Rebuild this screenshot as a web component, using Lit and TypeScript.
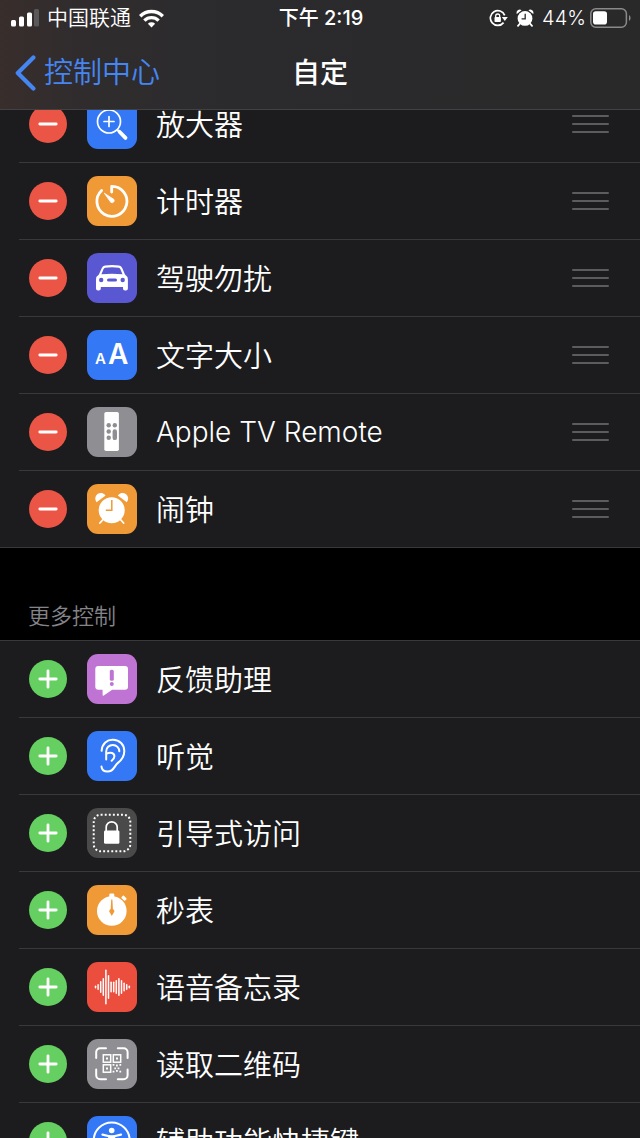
import { LitElement, html, css, svg } from "lit";
import { customElement, property } from "lit/decorators.js";

const TILE_COLORS: Record<string, string> = {
  magnifier: "#3478f6",
  timer: "#ef9a37",
  car: "#5a57d3",
  textsize: "#3478f6",
  remote: "#8e8e93",
  alarm: "#ef9a37",
  feedback: "#bf74d4",
  ear: "#3478f6",
  guided: "#4a4a4b",
  stopwatch: "#ef9a37",
  voice: "#eb4e3d",
  qr: "#8e8e93",
  access: "#3478f6",
};

const WAVE = [3, 6, 12, 18, 35, 24, 11, 11, 14, 18, 14, 9, 6, 3];

const GLYPHS: Record<string, unknown> = {
  magnifier: svg`
    <circle cx="22" cy="22.5" r="11.5" fill="none" stroke="#fff" stroke-width="1.7"/>
    <path d="M22 17.5v10M17 22.5h10" stroke="#fff" stroke-width="1.7" stroke-linecap="round"/>
    <path d="M30.3 30.8l2 2" stroke="#fff" stroke-width="2"/>
    <path d="M32.5 32.7l6 6.2" stroke="#fff" stroke-width="3.8" stroke-linecap="round"/>`,
  timer: svg`
    <path d="M24.7 16V10.3A15 15 0 1 1 14.6 14.4" fill="none" stroke="#fff" stroke-width="2.8" stroke-linecap="round" stroke-linejoin="round"/>
    <path d="M17.3 17.2l9.6 6.2a2.2 2.2 0 0 1-3 3z" fill="#fff" stroke="#fff" stroke-width=".8" stroke-linejoin="round"/>`,
  car: svg`
    <path fill-rule="evenodd" fill="#fff" d="M18 12.6Q25 11.6 32 12.6Q34.3 12.9 35.2 15L38 21.6Q40.8 23.4 40.9 26.5V35.6Q40.9 37.6 38.9 37.6H38Q36 37.6 36 35.6V34H13.8V35.6Q13.8 37.6 11.8 37.6H11Q9 37.6 9 35.6V26.5Q9 23.4 11.9 21.6L14.8 15Q15.7 12.9 18 12.6ZM18.2 14.7Q17 14.9 16.6 16L14.4 21.3Q25 20 35.5 21.3L33.3 16Q32.9 14.9 31.8 14.7Q25 13.9 18.2 14.7Z"/>
    <circle cx="14.2" cy="27" r="2.2" fill="#5a57d3"/><circle cx="35.7" cy="27" r="2.2" fill="#5a57d3"/>
    <rect x="20" y="25.5" width="10" height="3" rx="1.5" fill="#5a57d3"/>`,
  textsize: svg`
    <text x="8" y="34" font-size="15" font-weight="600" fill="#fff">A</text>
    <text x="21" y="34" font-size="28" font-weight="600" fill="#fff">A</text>`,
  remote: svg`
    <rect x="17.3" y="5" width="14.6" height="39" rx="1.8" fill="#fff"/>
    <g fill="#8e8e93"><circle cx="21.7" cy="18.2" r="2.2"/><circle cx="27.8" cy="18.2" r="2.2"/>
    <circle cx="21.7" cy="24.5" r="2.2"/><circle cx="21.7" cy="30.8" r="2.2"/>
    <rect x="25.6" y="22.3" width="4.4" height="10.8" rx="2.2"/></g>`,
  alarm: svg`
    <path d="M16.5 35l-3.6 4M33 35l3.6 4" stroke="#fff" stroke-width="1.8" stroke-linecap="round"/>
    <g fill="#fff"><path d="M9.6 18.2A5.6 5.6 0 1 1 18.6 11.6Z"/><path d="M39.8 18.2A5.6 5.6 0 1 0 30.8 11.6Z"/>
    <circle cx="24.7" cy="26.3" r="13"/></g>
    <path d="M24.8 16v10.3h-6" fill="none" stroke="#ef9a37" stroke-width="1.5"/>`,
  feedback: svg`
    <path fill="#fff" d="M11.3 12H38a3 3 0 0 1 3 3V32.8a3 3 0 0 1-3 3H25.2L16.8 41.6Q15.6 42.2 15.6 41V35.8H11.3a3 3 0 0 1-3-3V15a3 3 0 0 1 3-3Z"/>
    <rect x="22.8" y="15.8" width="4" height="11" rx="1.6" fill="#bf74d4"/><circle cx="24.8" cy="30" r="2" fill="#bf74d4"/>`,
  ear: svg`
    <g fill="none" stroke="#fff" stroke-width="2" stroke-linecap="round">
    <path d="M14.6 19.8C15.2 12.5 20 8.6 26 8.8C32.5 9 37.4 13.5 37.3 20.2C37.2 26 34.2 29.2 31.2 31.6C26.8 35 27.2 40.6 20.6 40.6C17 40.6 14.8 38.6 14.5 35.6"/>
    <path d="M19.2 28.4V20.5C19.2 16.6 22.2 14 25.8 14C29.6 14 32.3 16.8 32.3 20.3"/>
    <path d="M19.6 22.7C23.5 20.6 27.6 22 27.4 25.4C27.3 27.5 26.2 28.8 24.6 29.8"/></g>`,
  guided: svg`
    <rect x="6.7" y="6.7" width="36.6" height="36.6" rx="7" fill="none" stroke="#fff" stroke-width="2" stroke-dasharray="1.9 2.16"/>
    <path d="M19.2 23V19.3a5.5 5.5 0 0 1 11 0V23" fill="none" stroke="#fff" stroke-width="1.7"/>
    <rect x="17" y="22.4" width="15.4" height="13.4" rx="1.4" fill="#fff"/>`,
  stopwatch: svg`
    <g fill="#fff"><circle cx="24.8" cy="26" r="14.8"/><rect x="22.3" y="8.6" width="5" height="5" rx="1.2"/>
    <rect x="34.5" y="11.6" width="5" height="3.2" rx=".8" transform="rotate(45 37 13.2)"/></g>
    <path d="M24.2 14.5h1.2l.5 9.6a2.6 2.6 0 0 1 1.5 2.4L24.8 31l-2.6-4.5a2.6 2.6 0 0 1 1.5-2.4Z" fill="#ef9a37"/>`,
  voice: svg`
    <g stroke="#fff" stroke-width="1.5" stroke-linecap="round">${WAVE.map((h, i) => {
      const x = 8.5 + i * 2.6;
      return svg`<path d=${`M${x} ${25 - h / 2 + 0.7}V${25 + h / 2 - 0.7}`}/>`;
    })}</g>`,
  qr: svg`
    <path d="M9.2 19V13.2a4 4 0 0 1 4-4H19M30.8 9.2h5.8a4 4 0 0 1 4 4V19M40.6 30.4v5.8a4 4 0 0 1-4 4h-5.8M19 40.2h-5.8a4 4 0 0 1-4-4v-5.8" fill="none" stroke="#fff" stroke-width="2" stroke-linecap="round"/>
    <g fill="none" stroke="#fff" stroke-width="1.5"><rect x="16.3" y="15.8" width="7.4" height="7.4"/><rect x="26.3" y="15.8" width="7.4" height="7.4"/><rect x="16.3" y="25.8" width="7.4" height="7.4"/></g>
    <g fill="#fff"><rect x="19" y="18.5" width="2" height="2"/><rect x="29" y="18.5" width="2" height="2"/><rect x="19" y="28.5" width="2" height="2"/>
    <path d="M25.6 25h1.8v1.8h-1.8zM32.4 25h1.8v1.8h-1.8zM29 25.6h1.8v1.8h-1.8zM27.3 28.4h1.8v1.8h-1.8zM30.6 28.4h1.8v1.8h-1.8zM25.6 31.8h1.8v1.8h-1.8zM29 31h1.8v1.8h-1.8zM32.4 31.8h1.8v1.8h-1.8z"/></g>`,
  access: svg`
    <circle cx="24.7" cy="24.5" r="18" fill="none" stroke="#fff" stroke-width="2"/>
    <circle cx="24.7" cy="14.5" r="2.8" fill="#fff"/>
    <path d="M15.5 18.6l6.8 1.6v5l-3 9.6M34 18.6l-6.8 1.6v5l3 9.6" fill="none" stroke="#fff" stroke-width="2.2" stroke-linecap="round" stroke-linejoin="round"/>
    <rect x="21.6" y="19.2" width="6.2" height="7.6" fill="#fff"/>`,
};

@customElement("control-row")
class ControlRow extends LitElement {
  @property() icon = "";
  @property() label = "";
  @property({ type: Boolean }) included = false;

  static styles = css`
    :host { display: block; padding-left: 19px; }
    .row {
      display: flex; align-items: center; height: 76px; padding: 0 31px 0 10px;
      border-bottom: 1px solid #39393b;
    }
    :host([last]) { padding-left: 0; }
    :host([last]) .row { padding-left: 29px; }
    button { border: 0; padding: 0; margin: 0; background: none; display: block; flex: none; }
    .toggle { width: 38px; height: 38px; border-radius: 50%; background: #65cf61; }
    .toggle.remove { background: #eb5545; }
    .tile { width: 50px; height: 50px; margin: 0 19px 0 20px; flex: none; }
    svg { display: block; }
    .label {
      flex: 1; padding-top: 4px; color: #fff; font-size: 29px; line-height: 40px;
      white-space: nowrap;
    }
    .label.latin { padding-top: 0; font-size: 28px; }
    .grip { width: 37px; height: 18px; }
  `;

  render() {
    const latin = /^[\x20-\x7e]+$/.test(this.label);
    return html`<div class="row">
      <button class="toggle ${this.included ? "remove" : ""}" aria-label="${this.included ? "移除" : "添加"}${this.label}">
        <svg width="38" height="38" viewBox="0 0 38 38" stroke="#fff" stroke-width="2.8" stroke-linecap="round">
          ${this.included ? svg`<path d="M10.8 19h16.4"/>` : svg`<path d="M10.8 19h16.4M19 10.8v16.4"/>`}
        </svg>
      </button>
      <svg class="tile" viewBox="0 0 50 50" aria-hidden="true">
        <rect width="50" height="50" rx="11" fill=${TILE_COLORS[this.icon]}></rect>
        ${GLYPHS[this.icon]}
      </svg>
      <span class="label ${latin ? "latin" : ""}">${this.label}</span>
      ${this.included
        ? html`<button class="grip" aria-label="重新排序${this.label}">
            <svg width="37" height="18" viewBox="0 0 37 18" stroke="#5c5c5f" stroke-width="2" stroke-linecap="round">
              <path d="M1 1h35M1 9h35M1 17h35"/>
            </svg>
          </button>`
        : ""}
    </div>`;
  }
}

@customElement("app-root")
class AppRoot extends LitElement {
  static styles = css`
    :host {
      display: flex; flex-direction: column; height: 100vh; overflow: hidden;
      background: #000; color: #fff;
      font-family: Inter, "Noto Sans CJK SC", sans-serif; font-weight: 350;
    }
    header {
      flex: none; border-bottom: 1px solid #424244;
      background: linear-gradient(90deg, #382e2c 0, #302c2d 12%, #2b2b2d 35%, #29292a 100%);
    }
    svg { display: block; flex: none; }
    .status {
      display: grid; grid-template-columns: 1fr auto 1fr; align-items: center;
      height: 36px; padding: 0 9px 0 11px; font-size: 20px; line-height: 28px;
    }
    .left, .right { display: flex; align-items: center; gap: 8px; white-space: nowrap; }
    .left { font-size: 21px; }
    .right { justify-content: flex-end; }
    .time { font-weight: 500; }
    .power { display: flex; align-items: center; gap: 4px; }
    nav {
      display: grid; grid-template-columns: 1fr auto 1fr; align-items: center;
      height: 73px; padding: 0 15px;
    }
    .back {
      display: flex; align-items: center; gap: 8px; color: #4586f3; text-decoration: none;
      font-size: 29px; line-height: 40px;
    }
    h1 { margin: 0; font-size: 28px; line-height: 40px; font-weight: 500; }
    main { flex: 1; min-height: 0; overflow-y: auto; scrollbar-width: none; }
    .list { background: #1c1c1e; }
    .current { margin-top: -24px; }
    .more { border-top: 1px solid #39393b; }
    h2 {
      margin: 0; padding: 52px 28px 8px; font-size: 22px; line-height: 32px;
      font-weight: 350; color: #848489;
    }
  `;

  private current = [
    ["magnifier", "放大器"],
    ["timer", "计时器"],
    ["car", "驾驶勿扰"],
    ["textsize", "文字大小"],
    ["remote", "Apple TV Remote"],
    ["alarm", "闹钟"],
  ];

  private more = [
    ["feedback", "反馈助理"],
    ["ear", "听觉"],
    ["guided", "引导式访问"],
    ["stopwatch", "秒表"],
    ["voice", "语音备忘录"],
    ["qr", "读取二维码"],
    ["access", "辅助功能快捷键"],
  ];

  render() {
    return html`
      <header>
        <div class="status">
          <div class="left">
            <svg width="28" height="18" viewBox="0 0 28 18" fill="#fff">
              <rect x="0" y="11" width="5" height="6.5" rx="1.5"/>
              <rect x="8" y="7.5" width="5" height="10" rx="1.5"/>
              <rect x="16" y="3.5" width="5" height="14" rx="1.5"/>
              <rect x="23" y="0" width="5" height="17.5" rx="1.5" fill="#59595b"/>
            </svg>
            <span>中国联通</span>
            <svg width="25" height="19" viewBox="0 0 25 19" fill="none" stroke="#fff" stroke-width="3.4">
              <path d="M1.2 7.2a16 16 0 0 1 22.6 0"/>
              <path d="M5.4 11.6a10 10 0 0 1 14.2 0"/>
              <path d="M12.5 18.6l-3.6-3.8a5.2 5.2 0 0 1 7.2 0z" fill="#fff" stroke="none"/>
            </svg>
          </div>
          <span class="time">下午 2:19</span>
          <div class="right">
            <svg width="19" height="18" viewBox="0 0 19 18">
              <path d="M15.7 6.4A7.4 7.4 0 1 0 14.6 13.6" fill="none" stroke="#fff" stroke-width="1.7"/>
              <path d="M12.8 8h6l-3 4z" fill="#fff"/>
              <path d="M6.7 8.6V7a2 2 0 0 1 4 0v1.6" fill="none" stroke="#fff" stroke-width="1.3"/>
              <rect x="5.5" y="8" width="6.4" height="5" rx=".8" fill="#fff"/>
            </svg>
            <svg width="18" height="18" viewBox="0 0 18 18">
              <path d="M4 14.5l-2 2.4M14 14.5l2 2.4" stroke="#fff" stroke-width="1.8" stroke-linecap="round"/>
              <path d="M.8 5A3.2 3.2 0 0 1 5.6 1.2ZM17.2 5A3.2 3.2 0 0 0 12.4 1.2Z" fill="#fff"/>
              <circle cx="9" cy="9.4" r="7.4" fill="#fff"/>
              <path d="M9.2 4.8v5H5.6" fill="none" stroke="#29292a" stroke-width="1.3"/>
            </svg>
            <span class="power">
              <span>44%</span>
              <svg width="41" height="20" viewBox="0 0 41 20">
                <rect x=".8" y=".8" width="35.6" height="18.4" rx="5" fill="none" stroke="#8a8a8b" stroke-width="1.5"/>
                <rect x="3" y="3.2" width="14" height="13.4" rx="2.8" fill="#fff"/>
                <path d="M39 7v6q1.6-1 1.6-3T39 7z" fill="#8a8a8b"/>
              </svg>
            </span>
          </div>
        </div>
        <nav>
          <a class="back" href="#">
            <svg width="21" height="36" viewBox="0 0 21 36" fill="none" stroke="#4586f3" stroke-width="4.2" stroke-linecap="round" stroke-linejoin="round">
              <path d="M18.4 2.6L2.8 18l15.6 15.4"/>
            </svg>
            <span>控制中心</span>
          </a>
          <h1>自定</h1>
        </nav>
      </header>
      <main>
        <section class="list current">
          ${this.current.map(([icon, label], i) => html`
            <control-row included ?last=${i === this.current.length - 1} icon=${icon} label=${label}></control-row>`)}
        </section>
        <h2>更多控制</h2>
        <section class="list more">
          ${this.more.map(([icon, label]) => html`<control-row icon=${icon} label=${label}></control-row>`)}
        </section>
      </main>`;
  }
}
